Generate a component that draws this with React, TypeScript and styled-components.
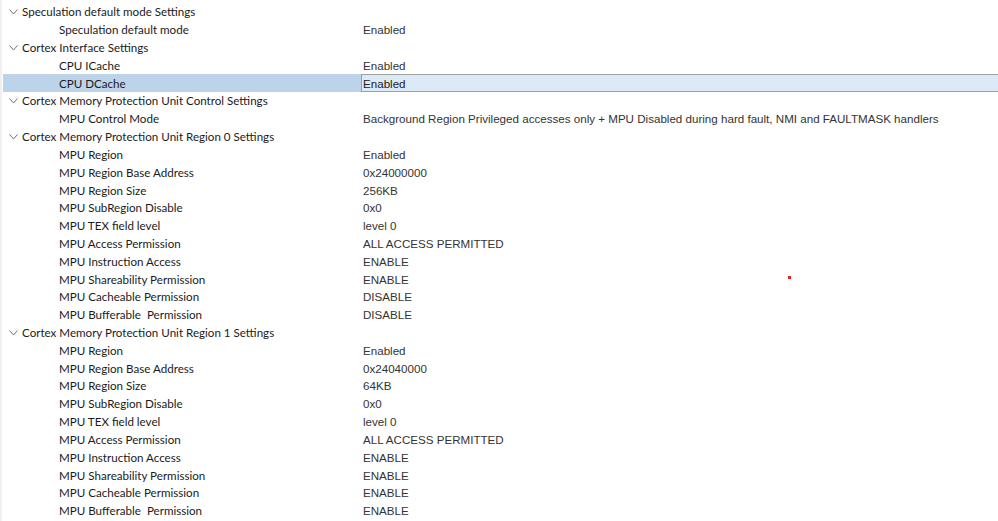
import React from "react";
import styled, { createGlobalStyle } from "styled-components";

const Global = createGlobalStyle`
  html, body { margin: 0; padding: 0; background: #ffffff; }
  body { width: 998px; height: 521px; overflow: hidden; }
`;

const Tree = styled.div`
  position: relative;
  width: 998px;
  height: 521px;
  padding-top: 3px;
  box-sizing: border-box;
  border-left: 2px solid #f0f0f0;
  background: #ffffff;
`;

const Row = styled.div`
  display: grid;
  grid-template-columns: 358px 1fr;
  height: 17.82px;
  align-items: center;
  margin-left: 1px;
`;

const LabelCell = styled.div<{ $selected?: boolean; $level: number }>`
  display: flex;
  align-items: center;
  height: 100%;
  padding-left: ${(p) => (p.$level === 0 ? 6 : 56)}px;
  background: ${(p) => (p.$selected ? "#bcd3ea" : "transparent")};
  font-family: "Lato", "Open Sans", sans-serif;
  font-size: 11.6px;
  color: #1b1b1b;
  white-space: pre;
`;

const Chevron = styled.svg`
  width: 9px;
  height: 6px;
  margin-right: 4px;
  flex: none;
`;

const ValueCell = styled.div<{ $selected?: boolean }>`
  display: flex;
  align-items: center;
  height: 100%;
  box-sizing: border-box;
  padding-left: ${(p) => (p.$selected ? 1 : 2)}px;
  font-family: "Liberation Sans", Arial, sans-serif;
  font-size: 11.6px;
  color: #333333;
  white-space: nowrap;
  ${(p) =>
    p.$selected
      ? `background: #dce9f6; border-top: 1px solid #a0a0a0; border-bottom: 1px solid #a0a0a0; border-left: 1px solid #a0a0a0; color: #202020;`
      : ""}
`;

const Dot = styled.div`
  position: absolute;
  left: 786px;
  top: 276px;
  width: 3px;
  height: 3px;
  background: #ee1c24;
`;

type Item = { label: string; value?: string; header?: boolean; selected?: boolean };

const items: Item[] = [
  { label: "Speculation default mode Settings", header: true },
  { label: "Speculation default mode", value: "Enabled" },
  { label: "Cortex Interface Settings", header: true },
  { label: "CPU ICache", value: "Enabled" },
  { label: "CPU DCache", value: "Enabled", selected: true },
  { label: "Cortex Memory Protection Unit Control Settings", header: true },
  {
    label: "MPU Control Mode",
    value:
      "Background Region Privileged accesses only + MPU Disabled during hard fault, NMI and FAULTMASK handlers",
  },
  { label: "Cortex Memory Protection Unit Region 0 Settings", header: true },
  { label: "MPU Region", value: "Enabled" },
  { label: "MPU Region Base Address", value: "0x24000000" },
  { label: "MPU Region Size", value: "256KB" },
  { label: "MPU SubRegion Disable", value: "0x0" },
  { label: "MPU TEX field level", value: "level 0" },
  { label: "MPU Access Permission", value: "ALL ACCESS PERMITTED" },
  { label: "MPU Instruction Access", value: "ENABLE" },
  { label: "MPU Shareability Permission", value: "ENABLE" },
  { label: "MPU Cacheable Permission", value: "DISABLE" },
  { label: "MPU Bufferable  Permission", value: "DISABLE" },
  { label: "Cortex Memory Protection Unit Region 1 Settings", header: true },
  { label: "MPU Region", value: "Enabled" },
  { label: "MPU Region Base Address", value: "0x24040000" },
  { label: "MPU Region Size", value: "64KB" },
  { label: "MPU SubRegion Disable", value: "0x0" },
  { label: "MPU TEX field level", value: "level 0" },
  { label: "MPU Access Permission", value: "ALL ACCESS PERMITTED" },
  { label: "MPU Instruction Access", value: "ENABLE" },
  { label: "MPU Shareability Permission", value: "ENABLE" },
  { label: "MPU Cacheable Permission", value: "ENABLE" },
  { label: "MPU Bufferable  Permission", value: "ENABLE" },
];

export default function App() {
  return (
    <>
      <Global />
      <Tree>
        {items.map((it, i) => (
          <Row key={i}>
            <LabelCell $level={it.header ? 0 : 1} $selected={it.selected}>
              {it.header && (
                <Chevron viewBox="0 0 9 6">
                  <path d="M0.5 0.5 L4.5 5 L8.5 0.5" fill="none" stroke="#707070" strokeWidth="1" />
                </Chevron>
              )}
              {it.label}
            </LabelCell>
            <ValueCell $selected={it.selected}>{it.value ?? ""}</ValueCell>
          </Row>
        ))}
        <Dot />
      </Tree>
    </>
  );
}
